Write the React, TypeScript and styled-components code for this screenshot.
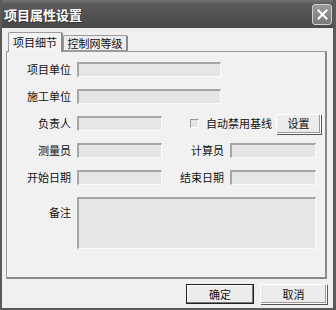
import React from "react";
import styled, { createGlobalStyle } from "styled-components";

const Global = createGlobalStyle`
  html, body { margin: 0; padding: 0; background: #efefef; }
  body { font-family: "Noto Sans CJK SC", "Noto Sans", sans-serif; }
`;

const Window = styled.div`
  width: 336px;
  height: 310px;
  box-sizing: border-box;
  background: #efefef;
  border-left: 2px solid #5a5a5a;
  border-right: 3px solid #5a5a5a;
  border-bottom: 2px solid #5a5a5a;
  display: flex;
  flex-direction: column;
  overflow: hidden;
`;

const TitleBar = styled.div`
  height: 28px;
  flex: none;
  margin: 0 -3px 0 -2px;
  background: linear-gradient(#737373 0%, #5a5a5a 15%, #505050 60%, #4a4a4a 100%);
  display: flex;
  align-items: center;
  justify-content: space-between;
  padding: 0 4px 0 4px;
`;

const Title = styled.span`
  color: #fff;
  font-size: 13px;
  font-weight: bold;
  font-family: "Noto Sans CJK SC", sans-serif;
  line-height: 1;
  text-shadow: 1px 1px 0 #333;
`;

const CloseBtn = styled.div`
  box-sizing: border-box;
  width: 20px;
  height: 21px;
  border: 1px solid #d0d0d0;
  border-radius: 3px;
  background: linear-gradient(#9a9a9a, #787878);
  display: flex;
  align-items: center;
  justify-content: center;
`;

const Body = styled.div`
  flex: 1;
  display: flex;
  flex-direction: column;
  padding: 3px 6px 0 4px;
`;

const TabRow = styled.div`
  display: flex;
  align-items: flex-end;
  height: 20px;
  padding-left: 2px;
`;

const Tab = styled.div<{ $active?: boolean }>`
  box-sizing: border-box;
  height: ${(p) => (p.$active ? 20 : 16)}px;
  width: ${(p) => (p.$active ? 55 : 65)}px;
  justify-content: center;
  border: 1px solid #9a9a9a;
  border-bottom: ${(p) => (p.$active ? "none" : "1px solid #9a9a9a")};
  border-right: 2px solid #8a8a8a;
  border-radius: 2px 2px 0 0;
  background: ${(p) => (p.$active ? "#f3f3f3" : "#ececec")};
  font-size: 11px;
  color: #111;
  display: flex;
  align-items: center;
  line-height: 1;
  position: relative;
  z-index: ${(p) => (p.$active ? 2 : 1)};
  margin-bottom: ${(p) => (p.$active ? "-1px" : "0")};
`;

const Panel = styled.div`
  box-sizing: border-box;
  height: 228px;
  background: #f1f1f1;
  border: 1px solid #9a9a9a;
  border-right: 2px solid #8a8a8a;
  border-bottom: 2px solid #8a8a8a;
  padding: 10px 0 0 0;
  display: flex;
  flex-direction: column;
  gap: 12px;
`;

const Row = styled.div<{ $h?: number }>`
  display: flex;
  align-items: ${(p) => (p.$h ? "flex-start" : "center")};
  height: ${(p) => p.$h ?? 15}px;
`;

const Label = styled.span<{ $w: number; $top?: number }>`
  width: ${(p) => p.$w}px;
  flex: none;
  text-align: right;
  font-size: 11px;
  color: #111;
  padding-right: 6px;
  margin-top: ${(p) => p.$top ?? 0}px;
  box-sizing: border-box;
  line-height: 1;
  white-space: nowrap;
`;

const Field = styled.div<{ $w: number; $h?: number }>`
  box-sizing: border-box;
  width: ${(p) => p.$w}px;
  height: ${(p) => p.$h ?? 15}px;
  flex: none;
  background: #e5e5e5;
  border-top: 2px solid #a6a6a6;
  border-left: 2px solid #a6a6a6;
  border-right: 1px solid #fafafa;
  border-bottom: 1px solid #fafafa;
`;

const Check = styled.div`
  box-sizing: border-box;
  width: 9px;
  height: 9px;
  flex: none;
  margin-left: 28px;
  border-top: 1px solid #9a9a9a;
  border-left: 1px solid #9a9a9a;
  border-right: 1px solid #fff;
  border-bottom: 1px solid #fff;
  background: #e6e6e6;
`;

const CheckText = styled.span`
  font-size: 11px;
  color: #111;
  margin-left: 7px;
  line-height: 1;
  white-space: nowrap;
  flex: none;
`;

const Button = styled.div<{ $w: number; $h: number; $default?: boolean }>`
  box-sizing: border-box;
  width: ${(p) => p.$w}px;
  height: ${(p) => p.$h}px;
  flex: none;
  display: flex;
  align-items: center;
  justify-content: center;
  font-size: 11px;
  color: #111;
  background: #ececec;
  border: 1px solid ${(p) => (p.$default ? "#222" : "#fff")};
  box-shadow: ${(p) =>
    p.$default
      ? "inset -1px -1px 0 #777, inset 1px 1px 0 #fff"
      : "1px 1px 0 #555, inset -1px -1px 0 #999"};
  line-height: 1;
`;

const Footer = styled.div`
  display: flex;
  justify-content: flex-end;
  gap: 6px;
  padding: 5px 0 0 0;
`;

const Spacer = styled.div<{ $w: number }>`
  width: ${(p) => p.$w}px;
  flex: none;
`;

export default function App() {
  return (
    <>
      <Global />
      <Window>
        <TitleBar>
          <Title>项目属性设置</Title>
          <CloseBtn>
            <svg width="11" height="11" viewBox="0 0 11 11">
              <path d="M1.5 1.5 L9.5 9.5 M9.5 1.5 L1.5 9.5" stroke="#fff" strokeWidth="2" strokeLinecap="square" />
            </svg>
          </CloseBtn>
        </TitleBar>
        <Body>
          <TabRow>
            <Tab $active>项目细节</Tab>
            <Tab>控制网等级</Tab>
          </TabRow>
          <Panel>
            <Row>
              <Label $w={70}>项目单位</Label>
              <Field $w={144} />
            </Row>
            <Row>
              <Label $w={70}>施工单位</Label>
              <Field $w={144} />
            </Row>
            <Row>
              <Label $w={70}>负责人</Label>
              <Field $w={85} />
              <Check />
              <CheckText>自动禁用基线</CheckText>
              <Spacer $w={4} />
              <Button $w={45} $h={20}>设置</Button>
            </Row>
            <Row>
              <Label $w={70}>测量员</Label>
              <Field $w={85} />
              <Label $w={68}>计算员</Label>
              <Field $w={86} />
            </Row>
            <Row>
              <Label $w={70}>开始日期</Label>
              <Field $w={85} />
              <Label $w={68}>结束日期</Label>
              <Field $w={86} />
            </Row>
            <Row $h={52}>
              <Label $w={70} $top={10}>备注</Label>
              <Field $w={239} $h={52} />
            </Row>
          </Panel>
          <Footer>
            <Button $w={68} $h={20} $default>确定</Button>
            <Button $w={67} $h={20}>取消</Button>
          </Footer>
        </Body>
      </Window>
    </>
  );
}
